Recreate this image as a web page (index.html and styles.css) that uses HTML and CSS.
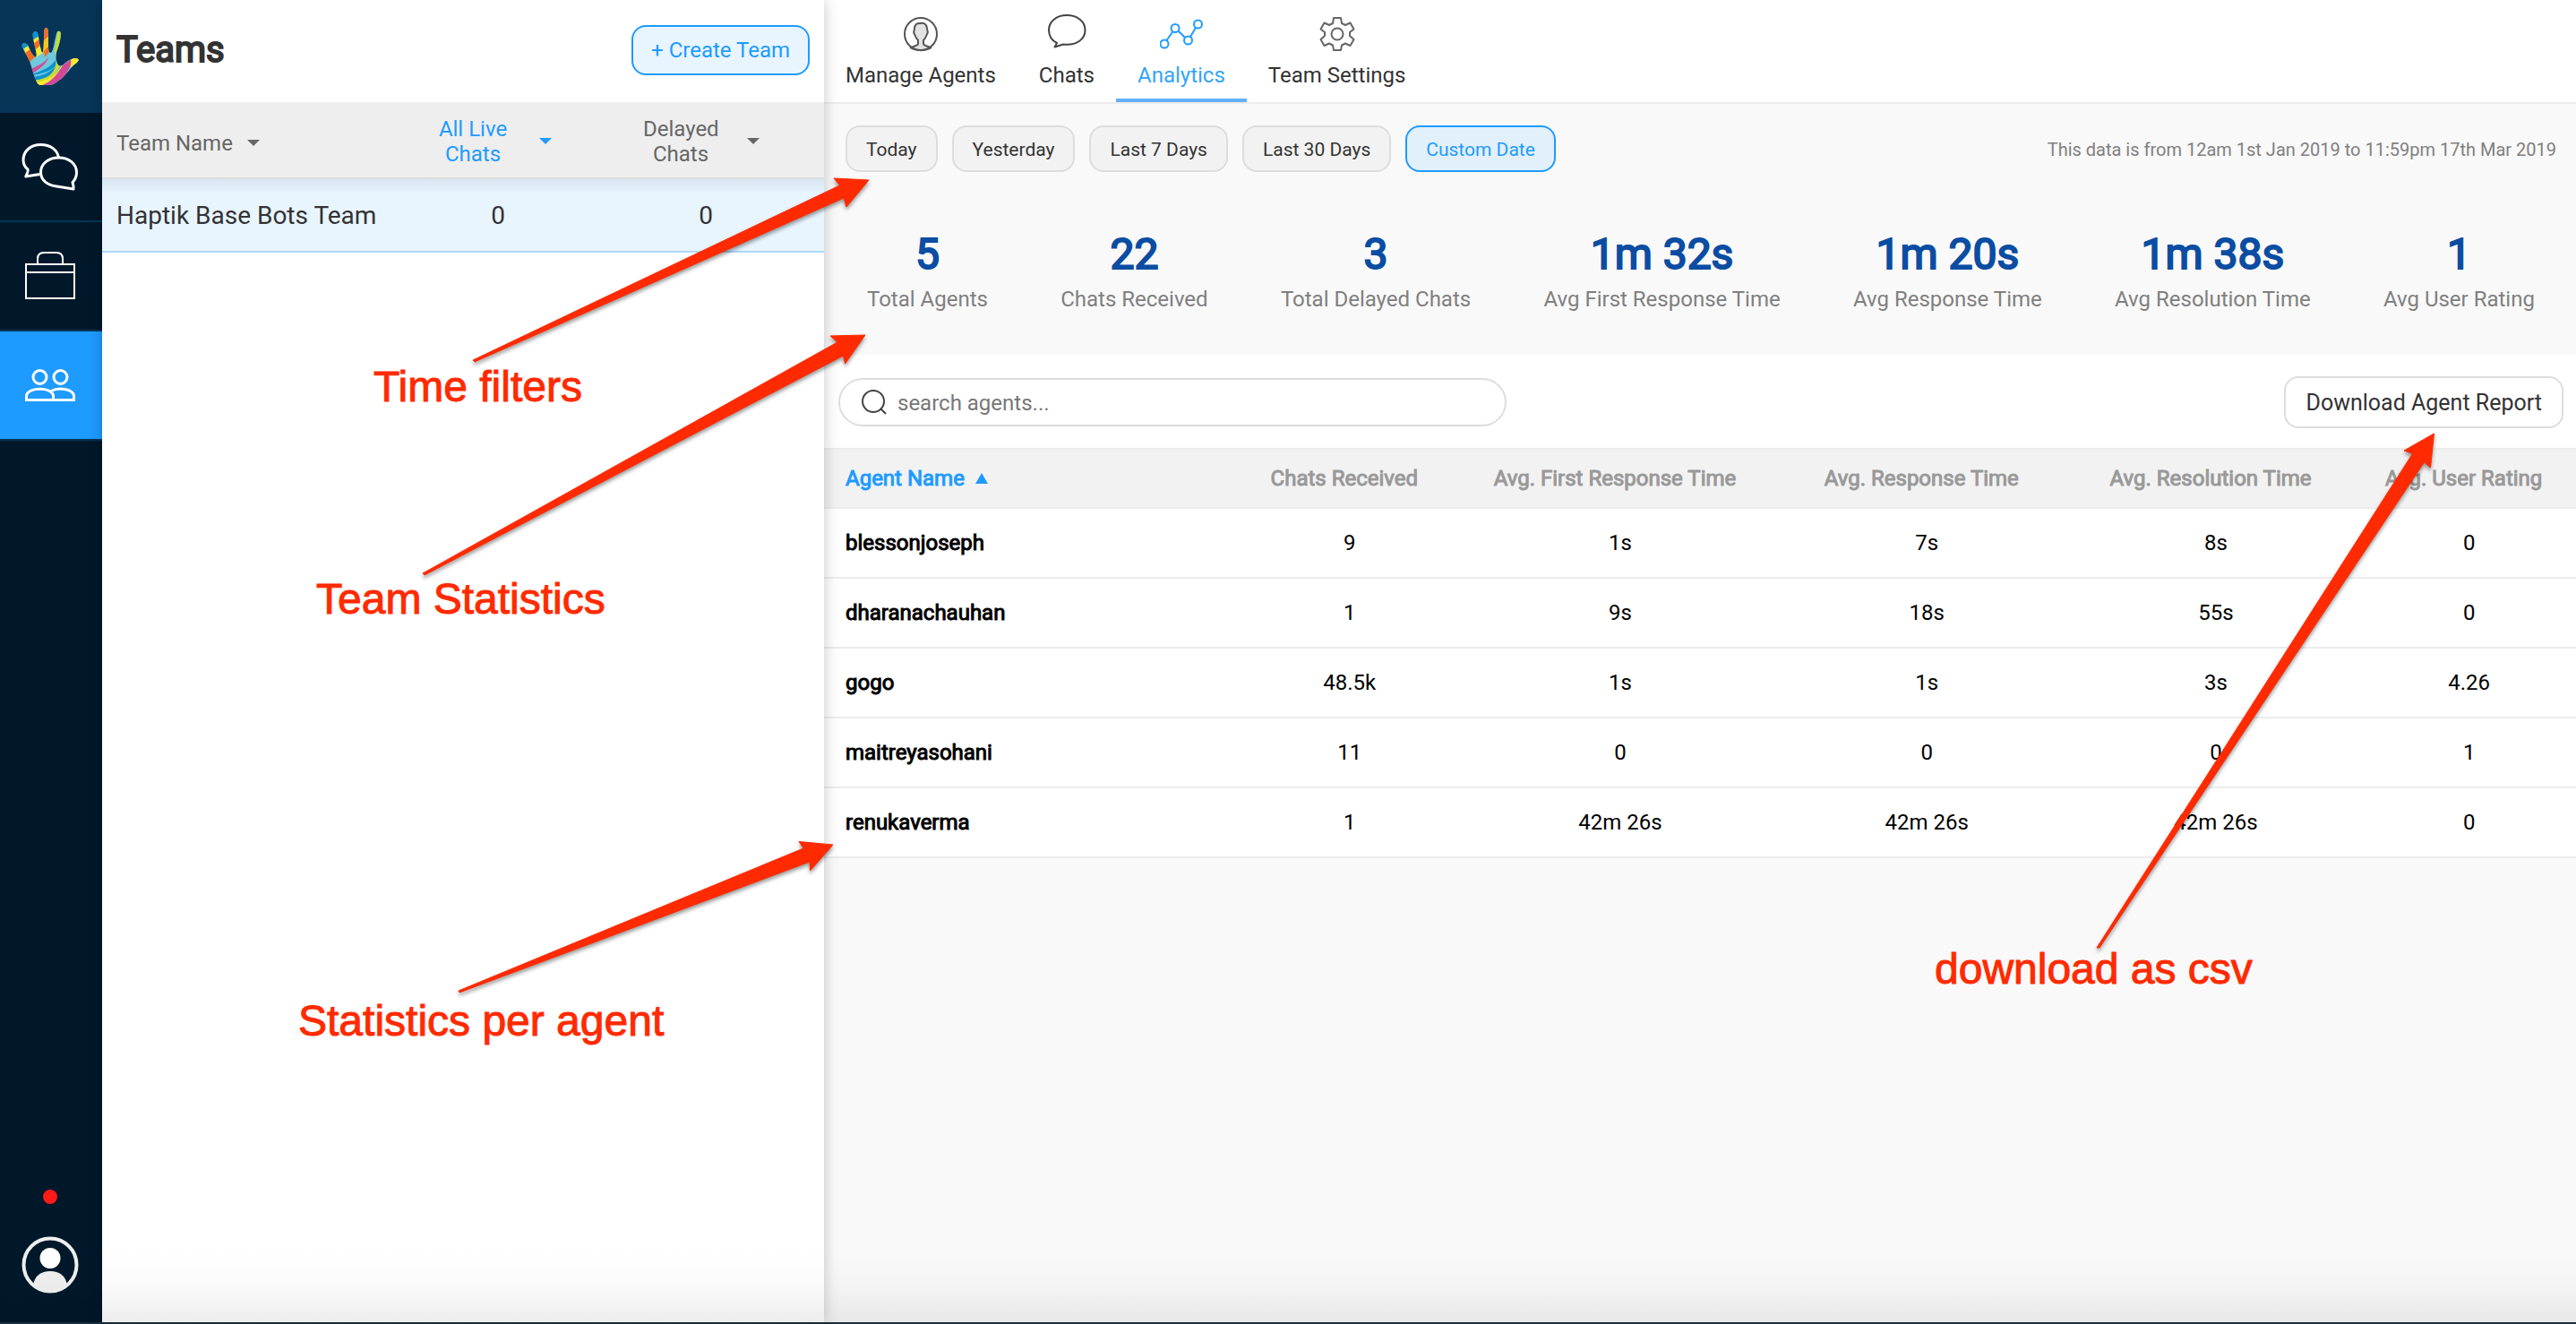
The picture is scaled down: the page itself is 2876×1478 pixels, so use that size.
FILE: index.html
```html
<!DOCTYPE html>
<html lang="en">
<head>
<meta charset="utf-8">
<title>Teams – Analytics</title>
<link rel="stylesheet" href="styles.css">
</head>
<body>
<div class="app">
  <nav class="sidebar" aria-label="Main">
    <a class="sidebar-logo" href="#" aria-label="Home">
      <svg width="64" height="64" viewBox="0 0 64 64">
        <clipPath id="hand"><path d="M.7 20.700C0 18 2.500 16.500 4.300 17.300C6.500 18.500 8 21 8.700 23.300C10.500 27 12 30 14.300 31.700C15.500 32.800 16.700 33 16.700 31.500C17.300 29 15.500 24 14.300 18.300L12.700 9C12.300 6 13.500 4.300 15.300 4.300C17.500 4 18.300 6 18.500 8L20 16.700C21 21 21.500 25 22.700 27.300C23.500 28 24.300 27.500 24.300 26L24.700 20L25.300 4C25.500 1 26.300 0 27.300 0C29 0 29.700 1.500 29.700 4L30 20C30 23 30.300 26 31 27.300C32.500 28 33.500 28 34.300 26C35.500 23 36.200 20 36.700 16.700L39 6.500C39.500 4.500 40.500 3.800 41.500 3.800C43.500 3.800 44 5 43.700 8C43.700 12 42.500 18 39.300 26.700C38 31 38 37 41 41.700C43 43 44.500 42.500 46 41.700C50 38 54 35 57.700 34.300C61 33.700 64 34.500 63.700 36.500C63 38.500 60 40.500 58 42C55 44.500 53 48 51 50C48 54 45 57 41 59.300C37 63 34 64 30 64L20.300 64C17.500 62 16.500 60 16 58C15 56 13.500 52 12.700 49C11.500 45 10.500 42 9.300 38C7 32 2 25 .7 20.700Z"/></clipPath>
        <g clip-path="url(#hand)">
          <rect width="64" height="64" fill="#6fc9dc"/>
          <path d="M0 15h12l-4 8H0z" fill="#0a93cf"/>
          <path d="M3 23l6-4 2 5-6 6z" fill="#ffe92e"/>
          <path d="M4 28l7-5 5 9-8 7z" fill="#f36b21"/>
          <path d="M11 3h10v7l-9 4z" fill="#0a93cf"/>
          <path d="M12 14l8-5v4l-7 6z" fill="#ffe92e"/>
          <path d="M13 18l8-6 1 7-7 6z" fill="#f36b21"/>
          <path d="M15 25l7-6 2 9-8 5z" fill="#ffe92e"/>
          <path d="M24-1h7v10l-7 6z" fill="#f36b21"/>
          <path d="M24 15l7-6v12l-7 7z" fill="#ffc61c"/>
          <path d="M25 26l6-6 1 6-6 7z" fill="#f36b21"/>
          <path d="M41 3h4l-1 12-6 14-1-3z" fill="#cddb2c"/>
          <path d="M11 46c9-5 16-7 19-14 0 6-7 12-18 19z" fill="#d24a96"/>
          <path d="M12 52c12-5 20-7 26-16l1 5c-7 9-15 9-26 12z" fill="#0a93cf"/>
          <path d="M11 55c12-1 21-5 28-13l2 3c-6 9-16 13-26 14z" fill="#0a93cf"/>
          <path d="M13 59c16-2 25-7 26-23l-1-8c4 12 5 14 4 16-5 10-12 17-26 22z" fill="#cddb2c"/>
          <path d="M15 61c12-1 22-5 30-19l4-1C42 54 32 62 18 66z" fill="#ffe92e"/>
          <path d="M21 65c13-5 18-12 25-23l10-8-1 8-8 14-10 9z" fill="#d24a96"/>
          <path d="M55 36c3-3 10-4 9 1-5 4-7 6-9 8-1-3 1-6 0-9z" fill="#ffe92e"/>
          <path d="M34 65c10-3 15-9 19-18l-1 6-12 12z" fill="#ffe92e"/>
        </g>
      </svg>
    </a>
    <a class="sidebar-item" href="#" aria-label="Chats">
      <svg width="64" height="54" viewBox="0 0 64 54" fill="none" stroke="#fff" stroke-width="3" stroke-linejoin="round">
        <path d="M41.500 17C40 8 32 2.500 21.500 2.500C10.500 2.500 2 9.500 2 19.500C2 24.500 4.300 28 7 30C8 33 6 34.500 4.800 38L20.500 35.500"/>
        <path d="M41.500 17C30 17 21.500 24 21.500 33C21.500 43 30 48 39 49L58 52C58.500 48.500 57.500 47.500 57 44.500C60 41.500 61.500 38 61.500 33.500C61.500 24 53 17 41.500 17Z"/>
      </svg>
    </a>
    <a class="sidebar-item" href="#" aria-label="Cases">
      <svg width="56" height="54" viewBox="0 0 56 54" fill="none" stroke="#fff" stroke-width="2">
        <path d="M14 14V8Q14 1 21 1H35Q42 1 42 8V14M1 14H55V52H1ZM1 23H55"/>
      </svg>
    </a>
    <a class="sidebar-item is-active" href="#" aria-label="Teams">
      <svg width="56" height="36" viewBox="0 0 56 36" fill="none" stroke="#fff" stroke-width="3">
        <circle cx="16.500" cy="9" r="7.500"/><circle cx="39.500" cy="9" r="7.500"/>
        <path d="M1.500 34.500V29C5 20 28 20 31.500 29V34.500ZM29 24.500C38 20 52 22 54.500 29V34.500H31"/>
      </svg>
    </a>
    <div class="sidebar-footer">
      <span class="status-dot"></span>
      <a class="avatar" href="#" aria-label="Profile">
        <svg width="64" height="64" viewBox="0 0 64 64">
          <clipPath id="ring"><circle cx="32" cy="32" r="31"/></clipPath>
          <circle cx="32" cy="32" r="29.500" fill="none" stroke="#f0f0f0" stroke-width="4"/>
          <circle cx="32" cy="24.500" r="11.500" fill="#fff"/>
          <path d="M13 56C14 44 22 39 32 39S50 44 51 56L44 66H20Z" fill="#f0f0f0" clip-path="url(#ring)"/>
        </svg>
      </a>
    </div>
  </nav>

  <section class="teams">
    <header class="teams-header">
      <h1 class="teams-title">Teams</h1>
      <button class="create-button" type="button">+ Create Team</button>
    </header>
    <table class="teams-table">
      <colgroup><col><col class="col-count"><col class="col-count"><col class="col-edge"></colgroup>
      <thead>
        <tr>
          <th scope="col" class="team-name"><button class="sort-button" type="button">Team Name
            <svg class="caret" width="14" height="8" viewBox="0 0 14 8"><path d="M0 0H14L7 7Z" fill="currentColor"/></svg></button></th>
          <th scope="col"><button class="sort-button is-sorted" type="button"><span class="two-line">All Live Chats</span>
            <svg class="caret" width="28" height="8" viewBox="0 0 28 8"><path d="M4 0H18L11 7Z" fill="currentColor"/></svg></button></th>
          <th scope="col"><button class="sort-button" type="button"><span class="two-line">Delayed Chats</span>
            <svg class="caret" width="28" height="8" viewBox="0 0 28 8"><path d="M4 0H18L11 7Z" fill="currentColor"/></svg></button></th>
          <td></td>
        </tr>
      </thead>
      <tbody>
        <tr><td class="team-name">Haptik Base Bots Team</td><td>0</td><td>0</td><td></td></tr>
      </tbody>
    </table>
  </section>

  <main class="main">
    <nav class="tabs" aria-label="Team">
      <a class="tab" href="#">
        <svg width="48" height="48" viewBox="0 0 48 48" fill="none" stroke="#555" stroke-width="2">
          <path d="M13 39.500C16 37 21 37 21 35V31C18 28 17.500 25 16.500 23C15.500 21.500 17 20 17 18C17 13 20 11.500 24 12C29 11 31 15 31 18C31 20 32.500 21.500 31.500 23C30.500 25 30 28 27 31V35C27 37 32 37 35 39.500C29 43 19 43 13 39.500Z" fill="#e2e2e2"/>
          <circle cx="24" cy="24" r="18"/>
        </svg>
        <span>Manage Agents</span>
      </a>
      <a class="tab" href="#">
        <svg width="48" height="48" viewBox="0 0 48 48" fill="none" stroke="#444" stroke-width="2" stroke-linejoin="round">
          <path d="M24 3C12.500 3 4 10 4 19.500C4 26 7 31 13 34L10.500 38.500L20 35.500C35 37 44.500 30 44.500 19.500C44.500 10 36 3 24 3Z"/>
        </svg>
        <span>Chats</span>
      </a>
      <a class="tab is-active" href="#" aria-current="page">
        <svg width="48" height="48" viewBox="0 0 48 48" fill="none" stroke="#1e9bff" stroke-width="2">
          <circle cx="5" cy="35" r="4.500"/><circle cx="17" cy="17.500" r="4.500"/><circle cx="31.500" cy="31" r="4.500"/><circle cx="42.500" cy="13" r="4.500"/>
          <path d="M7.500 31L14.500 21M20.500 20.500L28 28M34 27L40 17"/>
        </svg>
        <span>Analytics</span>
      </a>
      <a class="tab" href="#">
        <svg width="48" height="48" viewBox="0 0 48 48" fill="none" stroke="#666" stroke-width="2" stroke-linejoin="round">
          <path d="M20 6H28L29 12L33 14L38.500 11.500L42.500 18.500L38 22V26L42.500 30L38.500 37L33 34.500L29 36.500L28 42H20L19 36.500L15 34.500L9.500 37L5.500 30L10 26V22L5.500 18.500L9.500 11.500L15 14L19 12Z"/>
          <circle cx="24" cy="24" r="6.500"/>
        </svg>
        <span>Team Settings</span>
      </a>
    </nav>

    <section class="summary">
      <div class="filters">
        <button class="filter" type="button">Today</button>
        <button class="filter" type="button">Yesterday</button>
        <button class="filter" type="button">Last 7 Days</button>
        <button class="filter" type="button">Last 30 Days</button>
        <button class="filter is-active" type="button">Custom Date</button>
        <p class="range">This data is from 12am 1st Jan 2019 to 11:59pm 17th Mar 2019</p>
      </div>
      <dl class="stats">
        <div class="stat"><dt>Total Agents</dt><dd>5</dd></div>
        <div class="stat"><dt>Chats Received</dt><dd>22</dd></div>
        <div class="stat"><dt>Total Delayed Chats</dt><dd>3</dd></div>
        <div class="stat"><dt>Avg First Response Time</dt><dd>1m 32s</dd></div>
        <div class="stat"><dt>Avg Response Time</dt><dd>1m 20s</dd></div>
        <div class="stat"><dt>Avg Resolution Time</dt><dd>1m 38s</dd></div>
        <div class="stat"><dt>Avg User Rating</dt><dd>1</dd></div>
      </dl>
    </section>

    <section class="agents">
      <div class="toolbar">
        <label class="search">
          <svg width="28" height="28" viewBox="0 0 28 28" fill="none" stroke="#444" stroke-width="2">
            <circle cx="13" cy="13" r="12"/><path d="M21 21L27 27"/>
          </svg>
          <input type="search" placeholder="search agents..." aria-label="Search agents">
        </label>
        <button class="download" type="button">Download Agent Report</button>
      </div>
      <table class="agents-table">
        <colgroup><col class="col-name"><col class="col-chats"><col class="col-first"><col class="col-response"><col class="col-resolution"><col class="col-rating"></colgroup>
        <thead>
          <tr>
            <th scope="col" class="is-sorted">Agent Name <svg class="sort-up" width="14" height="14" viewBox="0 0 14 14"><path d="M7 0L14 12H0Z" fill="currentColor"/></svg></th>
            <th scope="col">Chats Received</th>
            <th scope="col">Avg. First Response Time</th>
            <th scope="col">Avg. Response Time</th>
            <th scope="col">Avg. Resolution Time</th>
            <th scope="col">Avg. User Rating</th>
          </tr>
        </thead>
        <tbody>
          <tr><th scope="row">blessonjoseph</th><td>9</td><td>1s</td><td>7s</td><td>8s</td><td>0</td></tr>
          <tr><th scope="row">dharanachauhan</th><td>1</td><td>9s</td><td>18s</td><td>55s</td><td>0</td></tr>
          <tr><th scope="row">gogo</th><td>48.5k</td><td>1s</td><td>1s</td><td>3s</td><td>4.26</td></tr>
          <tr><th scope="row">maitreyasohani</th><td>11</td><td>0</td><td>0</td><td>0</td><td>1</td></tr>
          <tr><th scope="row">renukaverma</th><td>1</td><td>42m 26s</td><td>42m 26s</td><td>42m 26s</td><td>0</td></tr>
        </tbody>
      </table>
    </section>
  </main>

  <div class="annotations">
    <svg class="arrows" fill="#ff2a00" stroke="#ff2a00" stroke-width="1" stroke-linejoin="round">
      <path d="M528 402L937.500 207L931 199L970 201L945 231L942 221L530 404Z"/>
      <path d="M472 640L935 382L927 375L966 374L943.500 406L941.500 397L474 642Z"/>
      <path d="M512 1106L897 947L892 939.500L930 943L904.500 972L904 962L513 1108Z"/>
      <path d="M2341 1058L2693.500 506.500L2684 503L2717.500 484L2713.500 522L2706.500 516L2344 1058Z"/>
    </svg>
    <span class="note note-filters">Time filters</span>
    <span class="note note-team">Team Statistics</span>
    <span class="note note-agent">Statistics per agent</span>
    <span class="note note-download">download as csv</span>
  </div>
</div>
</body>
</html>
```
FILE: styles.css
```css
* { box-sizing: border-box; }

body {
  margin: 0;
  font-family: Roboto, "Liberation Sans", sans-serif;
  font-size: 24px;
  line-height: 28px;
  color: #333;
}

h1, p, dl, dd { margin: 0; }
svg { display: block; flex: none; }
a { color: inherit; text-decoration: none; }
button, input { font: inherit; color: inherit; }
button { cursor: pointer; }

.app {
  position: relative;
  display: flex;
  min-height: 100vh;
  border-bottom: 2px solid #182e3f;
  background: #fff;
}

/* soft shade along the window's lower edge */
.app::after {
  content: "";
  position: absolute;
  inset: auto 0 0 0;
  height: 80px;
  background: linear-gradient(rgba(0, 0, 0, 0), rgba(0, 0, 0, 0.02) 50%, rgba(0, 0, 0, 0.07));
  pointer-events: none;
  z-index: 2;
}

/* Sidebar */
.sidebar {
  display: flex;
  flex-direction: column;
  flex: 0 0 114px;
  background: #01182b;
}
.sidebar-logo, .sidebar-item {
  display: flex;
  align-items: center;
  justify-content: center;
  padding-right: 2px;
}
.sidebar-logo { height: 126px; background: #063558; }
.sidebar-item { height: 122px; border-bottom: 2px solid #063558; }
.sidebar-item.is-active { background: #1e9bff; }
.sidebar-footer {
  display: flex;
  flex-direction: column;
  align-items: center;
  gap: 36px;
  margin-top: auto;
  padding: 0 2px 32px 0;
}
.status-dot { width: 16px; height: 16px; border-radius: 50%; background: #ff1a1a; }

/* Teams list */
.teams {
  position: relative;
  z-index: 1;
  flex: 0 0 806px;
  background: #fff;
  box-shadow: 0 0 16px rgba(0, 0, 0, 0.22);
}
.teams-header {
  display: flex;
  align-items: center;
  justify-content: space-between;
  height: 114px;
  padding: 0 16px 2px;
}
.teams-title {
  font-size: 40px;
  line-height: 48px;
  font-weight: 400;
  -webkit-text-stroke: 2px currentColor;
}
.create-button {
  height: 56px;
  padding: 0 20px;
  border: 2px solid #1e9bff;
  border-radius: 16px;
  background: #e8f5ff;
  color: #1e9bff;
}
.teams-table {
  width: 100%;
  table-layout: fixed;
  border-collapse: separate;
  border-spacing: 0;
  text-align: center;
}
.col-count { width: 232px; }
.col-edge { width: 16px; }
.teams-table thead th, .teams-table thead td {
  height: 86px;
  padding: 4px 0 0;
  border-bottom: 2px solid #ddd;
  background: #eee;
  color: #666;
  font-weight: 400;
}
.teams-table tbody tr {
  background: #e8f5ff linear-gradient(rgba(60, 80, 120, 0.09), rgba(60, 80, 120, 0) 16px);
}
.teams-table tbody td {
  height: 82px;
  padding: 2px 0 0;
  border-bottom: 2px solid #abd8fd;
  font-size: 28px;
  line-height: 32px;
}
.teams-table thead .team-name { padding: 8px 0 0 16px; text-align: left; }
.teams-table tbody .team-name { padding-left: 16px; text-align: left; }
.sort-button {
  display: inline-flex;
  align-items: center;
  gap: 28px;
  padding: 0;
  border: 0;
  background: none;
}
.team-name .sort-button { gap: 16px; }
.sort-button.is-sorted { color: #1e9bff; }
.two-line { width: 84px; }

/* Main area */
.main {
  flex: 1;
  min-width: 0;
  background: #f9f9f9;
}
.tabs {
  display: flex;
  height: 116px;
  border-bottom: 2px solid #ececec;
  background: #fff;
}
.tab {
  display: flex;
  flex-direction: column;
  align-items: center;
  gap: 8px;
  padding: 14px 24px 0;
  border-bottom: 4px solid transparent;
}
.tab.is-active { border-color: #64b0fb; color: #35a5f5; }

.summary { padding: 24px 22px 48px 24px; }
.filters { display: flex; align-items: center; gap: 16px; }
.filter {
  height: 52px;
  padding: 2px 21px 0;
  border: 2px solid #ddd;
  border-radius: 16px;
  background: #f2f2f2;
  font-size: 21px;
}
.filter.is-active { border-color: #1e9bff; background: #e2f0fb; color: #1e9bff; }
.range { margin-left: auto; padding-top: 2px; font-size: 20px; color: #808080; }

.stats {
  display: flex;
  justify-content: space-between;
  margin-top: 64px;
  padding: 0 24px;
}
.stat { display: flex; flex-direction: column-reverse; gap: 8px; text-align: center; }
.stat dt { color: #808080; }
.stat dd {
  font-size: 48px;
  line-height: 56px;
  color: #0b4da2;
  -webkit-text-stroke: 2px currentColor;
}

.toolbar {
  display: flex;
  align-items: center;
  justify-content: space-between;
  gap: 24px;
  padding: 24px 14px 22px 16px;
  background: #fff;
}
.search {
  display: flex;
  align-items: center;
  gap: 12px;
  flex: 0 1 746px;
  height: 54px;
  padding: 0 24px;
  border: 2px solid #ddd;
  border-radius: 27px;
}
.search input {
  flex: 1;
  min-width: 0;
  padding: 2px 0 0;
  border: 0;
  outline: 0;
  background: none;
}
.search input::placeholder { color: #777; opacity: 1; }
.download {
  height: 58px;
  padding: 2px 22px 0;
  border: 2px solid #ddd;
  border-radius: 16px;
  background: #fff;
  font-size: 25px;
}

.agents-table {
  width: 100%;
  table-layout: fixed;
  border-collapse: separate;
  border-spacing: 0;
  color: #000;
  text-align: center;
}
.col-name { width: 23.9%; }
.col-chats { width: 12.2%; }
.col-first { width: 18.7%; }
.col-response { width: 16.3%; }
.col-resolution { width: 16.7%; }
.col-rating { width: 12.2%; }
.agents-table th, .agents-table td { padding: 0; border-bottom: 2px solid #ececec; }
.agents-table th { font-weight: 400; -webkit-text-stroke: 1px currentColor; }
.agents-table thead th {
  height: 68px;
  padding-right: 12px;
  border-top: 2px solid #ececec;
  background: #f2f2f2;
  color: #999;
}
.agents-table tbody { background: #fff; }
.agents-table tbody th, .agents-table tbody td { height: 78px; }
.agents-table thead .is-sorted, .agents-table tbody th { padding-left: 24px; text-align: left; }
.agents-table thead .is-sorted { color: #1e9bff; }
.sort-up { display: inline-block; margin-left: 6px; }

/* Red callouts laid over the screen */
.annotations {
  position: absolute;
  inset: 0;
  z-index: 3;
  overflow: hidden;
  pointer-events: none;
}
.arrows {
  width: 100%;
  height: 100%;
  filter: drop-shadow(0 3px 2px rgba(0, 0, 0, 0.4));
}
.note {
  position: absolute;
  font-family: "Liberation Sans", Arial, sans-serif;
  font-size: 48px;
  line-height: 56px;
  white-space: nowrap;
  color: #ff2a00;
  -webkit-text-stroke: 1px currentColor;
}
.note-filters { left: 417px; top: 404px; }
.note-team { left: 353px; top: 641px; }
.note-agent { left: 333px; top: 1112px; }
.note-download { left: 2160px; top: 1054px; }
```
